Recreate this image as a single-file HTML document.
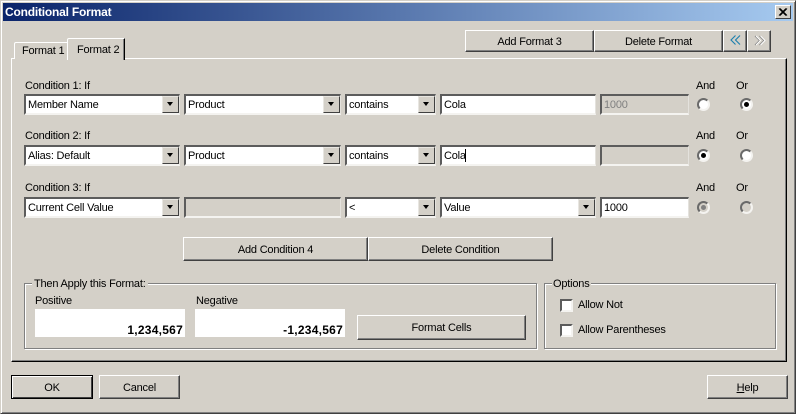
<!DOCTYPE html>
<html><head><meta charset="utf-8"><style>
html,body{margin:0;padding:0;background:#d4d0c8}
#w{position:relative;width:796px;height:414px;overflow:hidden;background:#d4d0c8;font:11px/13px "Liberation Sans",sans-serif;letter-spacing:-.2px;color:#000}
#w div,#w svg{position:absolute;box-sizing:border-box}
.t{white-space:nowrap}
.b{background:#d4d0c8;border:1px solid;border-color:#fff #404040 #404040 #fff;box-shadow:inset -1px -1px 0 #808080;text-align:center;white-space:nowrap}
.f{background:#fff;border-top:2px solid #5c5c5c;border-left:2px solid #5c5c5c;border-right:1px solid #e4e2dd;border-bottom:2px solid #f4f3f0;padding:3px 0 0 2px;white-space:nowrap;height:21px}
.g{background:#d4d0c8}
.a{right:0;top:0;width:17px;height:17px;background:#d4d0c8;border:1px solid;border-color:#e8e6e1 #404040 #404040 #e8e6e1}
.a:after{content:"";position:absolute;left:4px;top:5px;width:0;height:0;border-left:3.5px solid transparent;border-right:3.5px solid transparent;border-top:4px solid #000}
.gb{border:1px solid #808080;box-shadow:1px 1px 0 #fff,inset 1px 1px 0 #fff}
.r{width:13px;height:13px;border-radius:50%;background:#fff;border:2px solid;border-color:#6a6a6a #f4f3f0 #f4f3f0 #6a6a6a}
.rd{background:#d4d0c8}
.c{width:13px;height:13px;background:#fff;border:2px solid;border-color:#5c5c5c #f4f3f0 #f4f3f0 #5c5c5c}
.n{background:#fff;text-align:right;font-weight:bold;font-size:12px;letter-spacing:.25px;padding:15px 2px 0 0}
</style></head><body><div id="w">
<div style="left:0;top:0;width:796px;height:414px;border:1px solid;border-color:#d4d0c8 #404040 #404040 #d4d0c8;box-shadow:inset 1px 1px 0 #fff,inset -1px -1px 0 #808080"></div>
<div style="left:3px;top:3px;width:790px;height:18px;background:linear-gradient(90deg,#0a246a,#a6caf0)"></div>
<div class="t" style="left:5px;top:6px;color:#fff;font-weight:bold;font-size:12px;letter-spacing:-.2px">Conditional Format</div>
<div style="left:775px;top:5px;width:16px;height:14px;background:#d4d0c8;border:1px solid;border-color:#fff #404040 #404040 #fff"></div>
<svg style="left:775px;top:5px" width="16" height="14"><path d="M4 3.5L11 10.5M5 3.5L12 10.5M11 3.5L4 10.5M12 3.5L5 10.5" stroke="#000" stroke-width="1" fill="none"/></svg>

<div style="left:11px;top:58px;width:776px;height:304px;border:1px solid;border-color:#fff #000 #000 #fff;box-shadow:inset -1px -1px 0 #808080"></div>
<div style="left:14px;top:42px;width:53px;height:17px;background:#d4d0c8;border-top:1px solid #fff;border-left:1px solid #fff;border-top-left-radius:2px"></div>
<div class="t" style="left:22px;top:45px">Format 1</div>
<div style="left:67px;top:38px;width:58px;height:22px;background:#d4d0c8;border-top:1px solid #fff;border-left:1px solid #fff;border-right:1px solid #000;box-shadow:inset -1px 0 0 #808080;border-top-left-radius:2px"></div>
<div class="t" style="left:77px;top:44px">Format 2</div>

<div class="b" style="left:465px;top:30px;width:129px;height:22px;padding-top:5px">Add Format 3</div>
<div class="b" style="left:594px;top:30px;width:129px;height:22px;padding-top:5px">Delete Format</div>
<div class="b" style="left:723px;top:30px;width:24px;height:22px"></div>
<div class="b" style="left:747px;top:30px;width:24px;height:22px"></div>
<svg style="left:729px;top:34px" width="14" height="13"><path d="M6.5 1.5L2 6L6.5 10.5M11 1.5L6.5 6L11 10.5" stroke="#1a7fae" stroke-width="1.1" fill="none"/></svg>
<svg style="left:753px;top:34px" width="14" height="13"><path d="M2 2L6.5 6.5L2 11M6.5 2L11 6.5L6.5 11" stroke="#808080" stroke-width="1" fill="none"/><path d="M3 2L7.5 6.5L3 11M7.5 2L12 6.5L7.5 11" stroke="#fff" stroke-width="1" fill="none"/></svg>

<div class="t" style="left:25px;top:80px">Condition 1: If</div>
<div class="f" style="left:24px;top:94px;width:156px">Member Name<div class="a"></div></div>
<div class="f" style="left:184px;top:94px;width:157px">Product<div class="a"></div></div>
<div class="f" style="left:345px;top:94px;width:91px">contains<div class="a"></div></div>
<div class="f" style="left:440px;top:94px;width:156px">Cola</div>
<div class="f g" style="left:600px;top:94px;width:89px;color:#808080">1000</div>
<div class="t" style="left:696px;top:80px">And</div><div class="t" style="left:736px;top:80px">Or</div>
<div class="r" style="left:697px;top:98px"></div>
<div class="r" style="left:740px;top:98px"></div><div style="left:744px;top:102px;width:5px;height:5px;border-radius:50%;background:#000"></div>

<div class="t" style="left:25px;top:130px">Condition 2: If</div>
<div class="f" style="left:24px;top:145px;width:156px">Alias: Default<div class="a"></div></div>
<div class="f" style="left:184px;top:145px;width:157px">Product<div class="a"></div></div>
<div class="f" style="left:345px;top:145px;width:91px">contains<div class="a"></div></div>
<div class="f" style="left:440px;top:145px;width:156px">Cola</div>
<div style="left:465px;top:149px;width:1px;height:13px;background:#000"></div>
<div class="f g" style="left:600px;top:145px;width:89px"></div>
<div class="t" style="left:696px;top:130px">And</div><div class="t" style="left:736px;top:130px">Or</div>
<div class="r" style="left:697px;top:149px"></div><div style="left:701px;top:153px;width:5px;height:5px;border-radius:50%;background:#000"></div>
<div class="r" style="left:740px;top:149px"></div>

<div class="t" style="left:25px;top:182px">Condition 3: If</div>
<div class="f" style="left:24px;top:197px;width:156px">Current Cell Value<div class="a"></div></div>
<div class="f g" style="left:184px;top:197px;width:157px"></div>
<div class="f" style="left:345px;top:197px;width:91px">&lt;<div class="a"></div></div>
<div class="f" style="left:440px;top:197px;width:156px">Value<div class="a"></div></div>
<div class="f" style="left:600px;top:197px;width:89px">1000</div>
<div class="t" style="left:696px;top:182px">And</div><div class="t" style="left:736px;top:182px">Or</div>
<div class="r rd" style="left:697px;top:201px"></div><div style="left:701px;top:205px;width:5px;height:5px;border-radius:50%;background:#808080"></div>
<div class="r rd" style="left:740px;top:201px"></div>

<div class="b" style="left:183px;top:237px;width:185px;height:24px;padding-top:6px">Add Condition 4</div>
<div class="b" style="left:368px;top:237px;width:185px;height:24px;padding-top:6px">Delete Condition</div>

<div class="gb" style="left:24px;top:283px;width:513px;height:66px"></div>
<div class="t" style="left:32px;top:278px;background:#d4d0c8;padding:0 2px">Then Apply this Format:</div>
<div class="t" style="left:35px;top:295px">Positive</div>
<div class="t" style="left:196px;top:295px">Negative</div>
<div class="n" style="left:35px;top:309px;width:150px;height:28px">1,234,567</div>
<div class="n" style="left:195px;top:309px;width:150px;height:28px">-1,234,567</div>
<div class="b" style="left:357px;top:315px;width:169px;height:25px;padding-top:6px">Format Cells</div>

<div class="gb" style="left:544px;top:283px;width:232px;height:66px"></div>
<div class="t" style="left:552px;top:278px;background:#d4d0c8;padding:0 1px">Options</div>
<div class="c" style="left:560px;top:299px"></div>
<div class="t" style="left:578px;top:299px">Allow Not</div>
<div class="c" style="left:560px;top:324px"></div>
<div class="t" style="left:578px;top:324px">Allow Parentheses</div>

<div class="b" style="left:11px;top:375px;width:82px;height:24px;padding-top:6px;border:1px solid #000;box-shadow:inset 1px 1px 0 #fff,inset -1px -1px 0 #404040">OK</div>
<div class="b" style="left:99px;top:375px;width:81px;height:24px;padding-top:6px">Cancel</div>
<div class="b" style="left:707px;top:375px;width:81px;height:24px;padding-top:6px"><u>H</u>elp</div>
</div></body></html>
